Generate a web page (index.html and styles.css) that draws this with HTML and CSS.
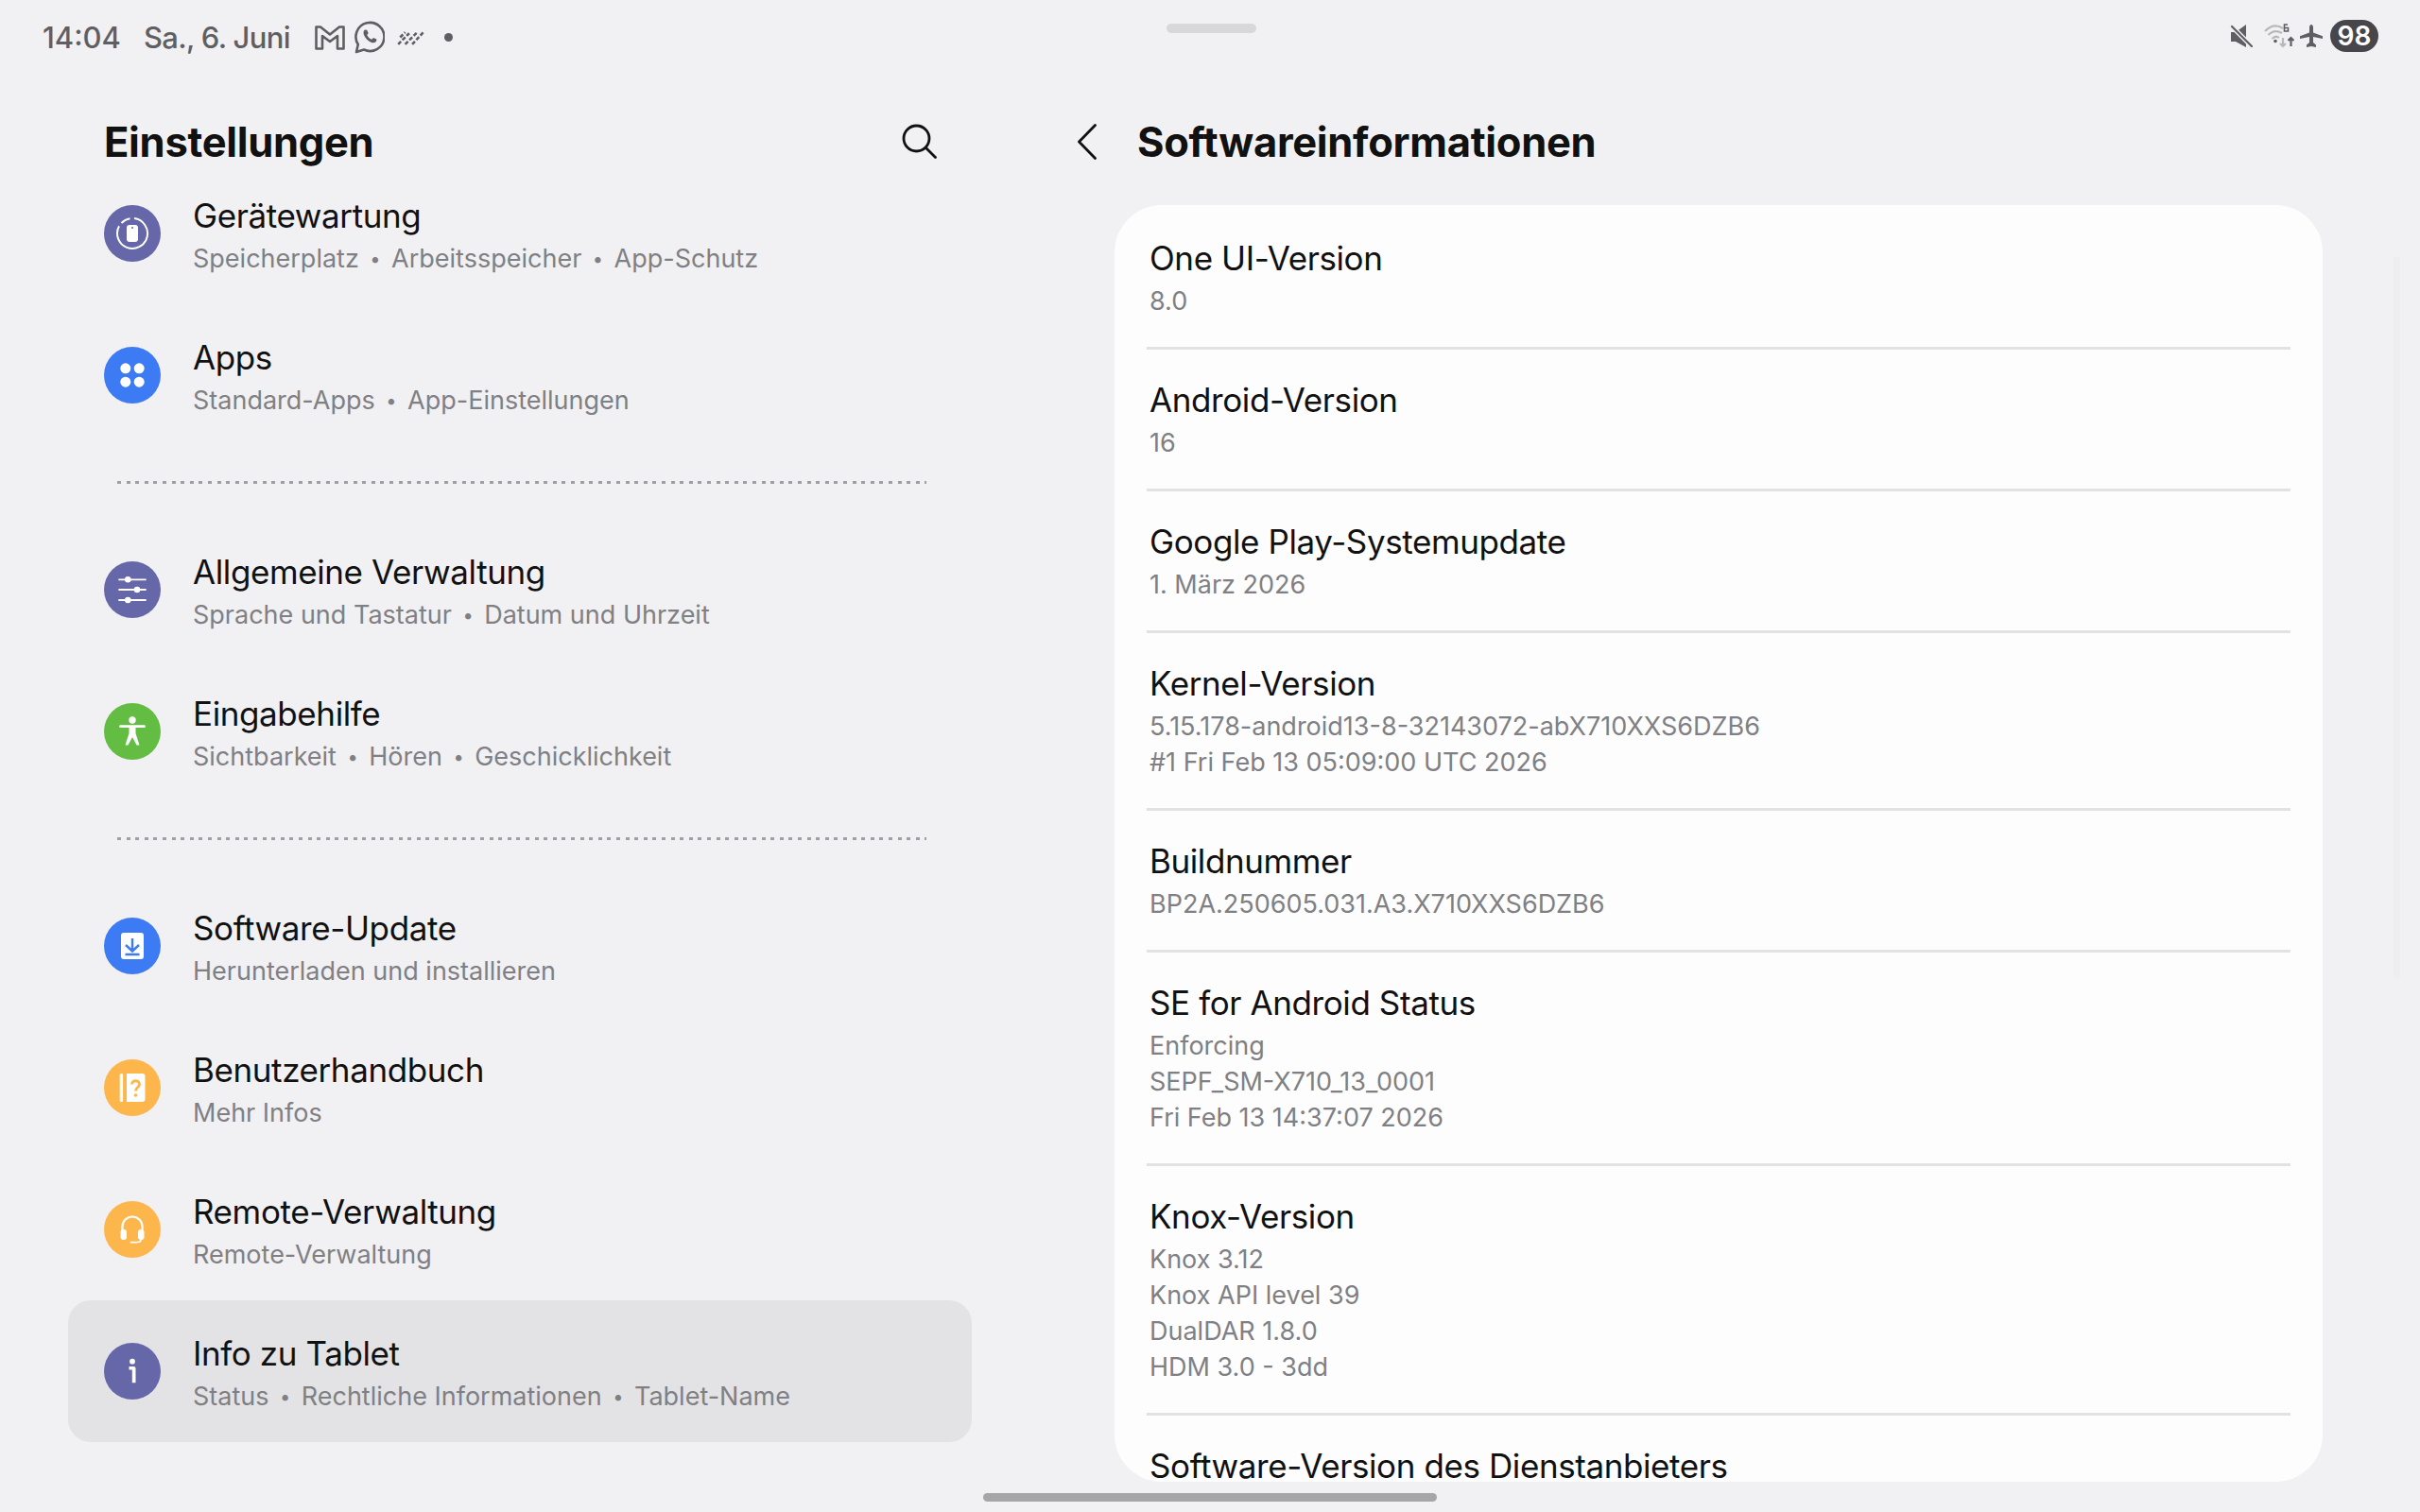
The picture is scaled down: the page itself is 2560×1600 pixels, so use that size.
FILE: index.html
```html
<!DOCTYPE html>
<html lang="de">
<head>
    <meta charset="UTF-8">
    <meta name="viewport" content="width=device-width, initial-scale=1.0">
    <title>Softwareinformationen</title>
    <link rel="stylesheet" href="styles.css">
</head>
<body>
    <div class="screen">
        <div class="status-bar">
            <div class="status-left">
                <span class="clock">14:04</span>
                <span class="date">Sa., 6. Juni</span>
                <svg class="st-icon gmail" viewBox="0 0 32 26" fill="none" stroke="#5f5f63" stroke-width="2.6" stroke-linejoin="round">
                    <path d="M1.500 1.500h4.500L16 9.500l10-8h4.500v23h-6.500V11l-8 6-8-6v13.500H1.500z"/>
                </svg>
                <svg class="st-icon whatsapp" viewBox="0 0 32 35" fill="none" stroke="#5f5f63" stroke-width="2.600">
                    <path d="M2 33l1.800-8A15 15 0 1 1 10 30.500z" stroke-linejoin="round"/>
                    <path d="M11 9.500c-1.700 1.200-2 3.500-.7 6.200 1.700 3.400 4.100 5.700 7.200 7 2.700 1.100 4.900.6 5.700-1.400l.2-1.700-3.400-1.700-1.700 1.900c-2.300-.9-4-2.600-5.100-4.900l1.500-1.600-1.500-3.500z" fill="#5f5f63" stroke="none"/>
                </svg>
                <svg class="st-icon slashes" viewBox="0 0 28 16" fill="none" stroke="#5f5f63" stroke-width="2.400" stroke-dasharray="4 2">
                    <path d="M1 15L12 4M8 15L20 3M15 15L27 2M3 8l5-5"/>
                </svg>
                <span class="more-dot"></span>
            </div>
            <div class="status-right">
                <svg class="st-icon mute" viewBox="0 0 24 24">
                    <path d="M1 8h5l11-8v24l-11-6H1z" fill="#5f5f63"/>
                    <path d="M1 1l23 23" stroke="#f1f1f3" stroke-width="5"/>
                    <path d="M2 2l21 21" stroke="#5f5f63" stroke-width="2.200" stroke-linecap="round"/>
                </svg>
                <svg class="st-icon wifi" viewBox="0 0 32 26" fill="none">
                    <path d="M1 8c6-6 13-7 19-3M4.500 12c4-4 9.500-5 14.500-2M8.500 16c2-2 5-3 7.500-1" stroke="#b9b9bc" stroke-width="2.200"/>
                    <circle cx="12" cy="18.500" r="1.800" fill="#5f5f63"/>
                    <path d="M25 1h-3.500v7h4V4.500h-4" stroke="#5f5f63" stroke-width="1.600"/>
                    <path d="M20 15v9M17 21l3 3 3-3" stroke="#b9b9bc" stroke-width="2.200"/>
                    <path d="M28.500 24v-9M25.500 18l3-3 3 3" stroke="#5f5f63" stroke-width="2.200"/>
                </svg>
                <svg class="st-icon plane" viewBox="0 0 24 24">
                    <path d="M12 0c1.200 0 2 1.500 2 3v5.500l10 3.700V15l-10-2v6l3 2.500V24l-5-1-5 1v-2.500l3-2.500v-6L0 15v-2.800l10-3.700V3c0-1.500.8-3 2-3z" fill="#5f5f63"/>
                </svg>
                <span class="battery">98</span>
            </div>
        </div>

        <div class="panes">
            <section class="list-pane">
                <header class="list-head">
                    <h1 class="big-title">Einstellungen</h1>
                    <svg class="search-icon" viewBox="0 0 37 37" fill="none" stroke="#111" stroke-width="2.800" stroke-linecap="round">
                        <circle cx="15.500" cy="15.500" r="13.500"/>
                        <path d="M25.500 25.500L35.500 35.500"/>
                    </svg>
                </header>
                <div class="list-scroll">
                    <div class="set-row first">
                        <span class="ic purple">
                            <svg viewBox="0 0 40 40" fill="none">
                                <path d="M22 4.100A16 16 0 1 1 6 12.300M5 15" stroke="#fff" stroke-width="2"/>
                                <path d="M17.500 4.300A16 16 0 0 0 8.500 9" stroke="#fff" stroke-width="2"/>
                                <rect x="14" y="11" width="12" height="18" rx="3" fill="#fff"/>
                                <circle cx="20" cy="14" r="1" fill="#6667a8"/>
                            </svg>
                        </span>
                        <div class="set-text">
                            <div class="set-name">Gerätewartung</div>
                            <div class="set-sub">Speicherplatz<i>•</i>Arbeitsspeicher<i>•</i>App-Schutz</div>
                        </div>
                    </div>
                    <div class="set-row">
                        <span class="ic blue">
                            <svg viewBox="0 0 40 40" fill="#fff">
                                <circle cx="12.800" cy="12.800" r="5.500"/>
                                <circle cx="27.200" cy="12.800" r="5.500"/>
                                <circle cx="12.800" cy="27.200" r="5.500"/>
                                <circle cx="27.200" cy="27.200" r="5.500"/>
                            </svg>
                        </span>
                        <div class="set-text">
                            <div class="set-name">Apps</div>
                            <div class="set-sub">Standard-Apps<i>•</i>App-Einstellungen</div>
                        </div>
                    </div>
                    <div class="dots"></div>
                    <div class="set-row">
                        <span class="ic purple">
                            <svg viewBox="0 0 40 40" fill="#fff" stroke="#fff" stroke-width="1.800" stroke-linecap="round">
                                <path d="M6 9.300h28M6 20h28M6 31h28"/>
                                <circle cx="15.300" cy="9.300" r="2.400"/>
                                <circle cx="25" cy="20" r="2.400"/>
                                <circle cx="15.300" cy="31" r="2.400"/>
                            </svg>
                        </span>
                        <div class="set-text">
                            <div class="set-name">Allgemeine Verwaltung</div>
                            <div class="set-sub">Sprache und Tastatur<i>•</i>Datum und Uhrzeit</div>
                        </div>
                    </div>
                    <div class="set-row">
                        <span class="ic green">
                            <svg viewBox="0 0 40 40" fill="#fff">
                                <circle cx="20" cy="8" r="3.700"/>
                                <path d="M7.500 13.300h25a1.400 1.400 0 0 1 0 2.800H23.500V22l4 12.500h-3L20 26l-4.500 8.500h-3l4-12.500v-5.900H7.500a1.400 1.400 0 0 1 0-2.800z"/>
                            </svg>
                        </span>
                        <div class="set-text">
                            <div class="set-name">Eingabehilfe</div>
                            <div class="set-sub">Sichtbarkeit<i>•</i>Hören<i>•</i>Geschicklichkeit</div>
                        </div>
                    </div>
                    <div class="dots"></div>
                    <div class="set-row">
                        <span class="ic blue">
                            <svg viewBox="0 0 40 40">
                                <rect x="8" y="6" width="24" height="28" rx="3" fill="#fff"/>
                                <path d="M20 12v13.500M13 19l7 6.500 7-6.500M12.500 29h15" fill="none" stroke="#3d7bf4" stroke-width="2.400"/>
                            </svg>
                        </span>
                        <div class="set-text">
                            <div class="set-name">Software-Update</div>
                            <div class="set-sub">Herunterladen und installieren</div>
                        </div>
                    </div>
                    <div class="set-row">
                        <span class="ic orange">
                            <svg viewBox="0 0 40 40">
                                <rect x="6.700" y="5" width="3.400" height="30" rx="1.500" fill="#fff"/>
                                <path d="M14 5h16.500a3 3 0 0 1 3 3v24a3 3 0 0 1-3 3H14z" fill="#fff"/>
                                <path d="M19.500 16.500c0-5 8-5 8 0 0 3-4 3-4 7" fill="none" stroke="#fdb64b" stroke-width="2.800"/>
                                <circle cx="23.500" cy="28" r="1.800" fill="#fdb64b"/>
                            </svg>
                        </span>
                        <div class="set-text">
                            <div class="set-name">Benutzerhandbuch</div>
                            <div class="set-sub">Mehr Infos</div>
                        </div>
                    </div>
                    <div class="set-row">
                        <span class="ic orange">
                            <svg viewBox="0 0 40 40" fill="none">
                                <path d="M9.500 22v-5a10.500 10.500 0 0 1 21 0v5" stroke="#fff" stroke-width="2.200"/>
                                <rect x="7.500" y="20" width="6.500" height="11" rx="3" fill="#fff"/>
                                <rect x="26" y="20" width="6.500" height="11" rx="3" fill="#fff"/>
                                <path d="M29 31c0 2-2 2.700-5.500 2.700h-5" stroke="#fff" stroke-width="1.800" stroke-linecap="round"/>
                            </svg>
                        </span>
                        <div class="set-text">
                            <div class="set-name">Remote-Verwaltung</div>
                            <div class="set-sub">Remote-Verwaltung</div>
                        </div>
                    </div>
                    <div class="set-row selected">
                        <span class="ic purple">
                            <svg viewBox="0 0 40 40" fill="#fff">
                                <circle cx="20" cy="9.700" r="2.900"/>
                                <path d="M16.500 15h5a2 2 0 0 1 2 2v15.300h-3.700V18.500h-3.300z"/>
                            </svg>
                        </span>
                        <div class="set-text">
                            <div class="set-name">Info zu Tablet</div>
                            <div class="set-sub">Status<i>•</i>Rechtliche Informationen<i>•</i>Tablet-Name</div>
                        </div>
                    </div>
                </div>
            </section>

            <section class="detail-pane">
                <header class="detail-head">
                    <svg class="back-icon" viewBox="0 0 20 38" fill="none" stroke="#111" stroke-width="2.800" stroke-linecap="round" stroke-linejoin="round">
                        <path d="M18.500 1.500L1.500 19l17 17.500"/>
                    </svg>
                    <h1 class="big-title">Softwareinformationen</h1>
                </header>
                <div class="info-card">
                    <div class="info-row">
                        <div class="info-name">One UI-Version</div>
                        <div class="info-val">8.0</div>
                    </div>
                    <div class="info-row">
                        <div class="info-name">Android-Version</div>
                        <div class="info-val">16</div>
                    </div>
                    <div class="info-row">
                        <div class="info-name">Google Play-Systemupdate</div>
                        <div class="info-val">1. März 2026</div>
                    </div>
                    <div class="info-row">
                        <div class="info-name">Kernel-Version</div>
                        <div class="info-val">5.15.178-android13-8-32143072-abX710XXS6DZB6</div>
                        <div class="info-val">#1 Fri Feb 13 05:09:00 UTC 2026</div>
                    </div>
                    <div class="info-row">
                        <div class="info-name">Buildnummer</div>
                        <div class="info-val">BP2A.250605.031.A3.X710XXS6DZB6</div>
                    </div>
                    <div class="info-row">
                        <div class="info-name">SE for Android Status</div>
                        <div class="info-val">Enforcing</div>
                        <div class="info-val">SEPF_SM-X710_13_0001</div>
                        <div class="info-val">Fri Feb 13 14:37:07 2026</div>
                    </div>
                    <div class="info-row">
                        <div class="info-name">Knox-Version</div>
                        <div class="info-val">Knox 3.12</div>
                        <div class="info-val">Knox API level 39</div>
                        <div class="info-val">DualDAR 1.8.0</div>
                        <div class="info-val">HDM 3.0 - 3dd</div>
                    </div>
                    <div class="info-row">
                        <div class="info-name">Software-Version des Dienstanbieters</div>
                    </div>
                </div>
            </section>
        </div>

        <div class="top-handle"></div>
        <div class="scroll-track"></div>
        <div class="home-bar"></div>
    </div>
</body>
</html>
```

FILE: styles.css
```css
* {
    margin: 0;
    padding: 0;
    box-sizing: border-box;
}

body {
    font-family: Inter, "Noto Sans", sans-serif;
    background-color: #f1f1f3;
    color: #111;
    overflow: hidden;
}

.screen {
    width: 2560px;
    height: 1600px;
    position: relative;
    display: flex;
    flex-direction: column;
}

/* status bar */
.status-bar {
    height: 78px;
    padding: 0 44px;
    display: flex;
    align-items: center;
    justify-content: space-between;
    color: #5f5f63;
}

.status-left,
.status-right {
    display: flex;
    align-items: center;
}

.status-left {
    padding-top: 1px;
}

.status-right {
    padding-bottom: 2px;
}

.clock,
.date {
    font-size: 31px;
    font-weight: 500;
}

.clock {
    margin-left: 1px;
    margin-right: 24px;
}

.date {
    margin-right: 26px;
    letter-spacing: -0.7px;
}

.st-icon {
    display: block;
}

.gmail {
    width: 32px;
    height: 26px;
    margin-right: 10px;
}

.whatsapp {
    width: 32px;
    height: 35px;
    margin-right: 13px;
}

.slashes {
    width: 30px;
    height: 17px;
    margin-right: 20px;
}

.more-dot {
    width: 9px;
    height: 9px;
    border-radius: 50%;
    background-color: #5f5f63;
}

.mute {
    width: 24px;
    height: 24px;
    margin-right: 12px;
}

.wifi {
    width: 32px;
    height: 26px;
    margin-right: 6px;
}

.plane {
    width: 24px;
    height: 24px;
    margin-right: 8px;
}

.battery {
    width: 51px;
    height: 34px;
    border-radius: 17px;
    background-color: #47474b;
    color: #fff;
    font-size: 28px;
    font-weight: 600;
    display: flex;
    align-items: center;
    justify-content: center;
}

/* two panes */
.panes {
    flex: 1;
    display: flex;
    min-height: 0;
}

.list-pane {
    width: 1100px;
    padding-left: 72px;
    display: flex;
    flex-direction: column;
}

.list-head {
    width: 956px;
    height: 136px;
    padding: 8px 37px 0 38px;
    display: flex;
    align-items: center;
    justify-content: space-between;
    flex-shrink: 0;
}

.big-title {
    font-size: 43.5px;
    font-weight: 700;
    letter-spacing: -0.3px;
}

.search-icon {
    width: 37px;
    height: 37px;
    margin-top: -2px;
}

.list-scroll {
    width: 956px;
    overflow: hidden;
    flex: 1;
}

.set-row {
    height: 150px;
    padding-left: 38px;
    display: flex;
    align-items: center;
    gap: 34px;
    border-radius: 24px;
}

.set-row.first {
    margin-top: -42px;
}

.set-row.selected {
    background-color: #e3e3e5;
}

.ic {
    width: 60px;
    height: 60px;
    border-radius: 50%;
    flex-shrink: 0;
    display: flex;
    align-items: center;
    justify-content: center;
}

.ic svg {
    width: 40px;
    height: 40px;
}

.purple {
    background-color: #6667a8;
}

.blue {
    background-color: #3d7bf4;
}

.green {
    background-color: #63bd43;
}

.orange {
    background-color: #fdb64b;
}

.set-text {
    padding-top: 4px;
}

.set-name {
    font-size: 35px;
    line-height: 46px;
    letter-spacing: -0.4px;
}

.set-sub {
    margin-top: 4px;
    font-size: 27px;
    line-height: 38px;
    color: #808084;
}

.set-sub i {
    font-style: normal;
    margin: 0 11.5px;
    font-size: 20px;
    vertical-align: 2px;
}

.dots {
    margin: 37px 48px 37px 52px;
    height: 3px;
    background: repeating-linear-gradient(90deg, #a0a0a4 0 4px, transparent 4px 9.6px);
}

/* detail pane */
.detail-pane {
    flex: 1;
    display: flex;
    flex-direction: column;
    min-width: 0;
}

.detail-head {
    height: 139px;
    padding: 5px 0 0 40px;
    display: flex;
    align-items: center;
    gap: 43px;
    flex-shrink: 0;
}

.back-icon {
    width: 20px;
    height: 38px;
}

.info-card {
    width: 1278px;
    margin-left: 79px;
    height: 1351px;
    flex-shrink: 0;
    padding: 3px 34px 0;
    background-color: #fdfdfe;
    border-radius: 50px;
    overflow: hidden;
}

.info-row {
    padding: 30px 0 29px 3px;
    border-bottom: 3px solid #e2e2e4;
}

.info-row:last-child {
    border-bottom: none;
}

.info-name {
    font-size: 35px;
    line-height: 46px;
    letter-spacing: -0.4px;
    margin-bottom: 4px;
}

.info-val {
    font-size: 27px;
    line-height: 38px;
    color: #808084;
}

/* system handles */
.top-handle {
    position: absolute;
    left: 1234px;
    top: 25px;
    width: 95px;
    height: 10px;
    border-radius: 5px;
    background-color: #d8d8da;
}

.scroll-track {
    position: absolute;
    left: 2532px;
    top: 272px;
    width: 7px;
    height: 764px;
    background-color: #eeeeef;
}

.home-bar {
    position: absolute;
    left: 1040px;
    top: 1580px;
    width: 480px;
    height: 9px;
    border-radius: 5px;
    background-color: #a6a6a6;
}
```
